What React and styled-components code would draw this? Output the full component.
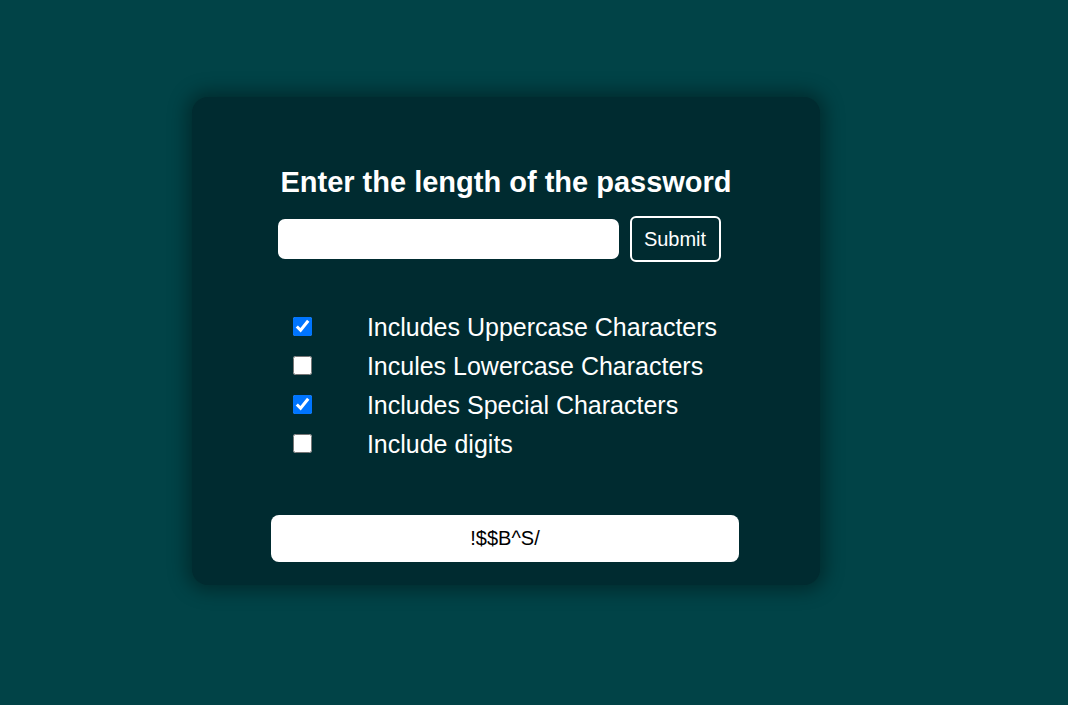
import styled, { createGlobalStyle } from "styled-components";
import { useState, Fragment } from "react";

const GlobalStyle = createGlobalStyle`
  html, body {
    margin: 0;
    padding: 0;
    background: #014347;
    font-family: "Liberation Sans", Arial, sans-serif;
  }
`;

const Page = styled.div`
  width: 1068px;
  height: 705px;
  padding: 97px 0 0 192px;
  box-sizing: border-box;
`;

const Card = styled.div`
  width: 628px;
  height: 488px;
  box-sizing: border-box;
  background: #002b30;
  border-radius: 16px;
  box-shadow: 0 0 18px 6px rgba(0, 0, 0, 0.35);
  display: flex;
  flex-direction: column;
  align-items: center;
  padding-top: 67px;
`;

const Title = styled.h2`
  margin: 0;
  color: #ffffff;
  font-size: 29px;
  font-weight: bold;
  line-height: 36px;
`;

const InputRow = styled.div`
  display: flex;
  align-items: center;
  gap: 11px;
  margin-top: 16px;
  margin-left: -14px;
`;

const LengthInput = styled.input`
  width: 341px;
  height: 40px;
  box-sizing: border-box;
  border: none;
  border-radius: 7px;
  background: #ffffff;
  outline: none;
  font-size: 18px;
  padding: 0 10px;
`;

const SubmitButton = styled.button`
  width: 91px;
  height: 46px;
  box-sizing: border-box;
  background: transparent;
  color: #ffffff;
  border: 2px solid #ffffff;
  border-radius: 6px;
  font-family: "Liberation Sans", Arial, sans-serif;
  font-size: 20px;
  cursor: pointer;
`;

const Options = styled.div`
  display: grid;
  grid-template-columns: 74px auto;
  margin-top: 46px;
  margin-left: -2px;
`;

const CheckBox = styled.input`
  width: 19px;
  height: 19px;
  margin: 0 0 2px;
  align-self: center;
  accent-color: #0075ff;
`;

const OptionLabel = styled.label`
  color: #ffffff;
  font-size: 25px;
  line-height: 39px;
`;

const Output = styled.div`
  width: 468px;
  height: 47px;
  margin-top: 51px;
  margin-left: -2px;
  background: #ffffff;
  border-radius: 8px;
  display: flex;
  align-items: center;
  justify-content: center;
  font-size: 20px;
  color: #000000;
`;

const options = [
  { id: "upper", label: "Includes Uppercase Characters", checked: true },
  { id: "lower", label: "Incules Lowercase Characters", checked: false },
  { id: "special", label: "Includes Special Characters", checked: true },
  { id: "digits", label: "Include digits", checked: false },
];

const App = () => {
  const [checks, setChecks] = useState(options.map((o) => o.checked));

  return (
    <Page>
      <GlobalStyle />
      <Card>
        <Title>Enter the length of the password</Title>
        <InputRow>
          <LengthInput type="text" />
          <SubmitButton>Submit</SubmitButton>
        </InputRow>
        <Options>
          {options.map((o, i) => (
            <Fragment key={o.id}>
              <CheckBox
                id={o.id}
                type="checkbox"
                checked={checks[i]}
                onChange={() =>
                  setChecks(checks.map((c, j) => (j === i ? !c : c)))
                }
              />
              <OptionLabel htmlFor={o.id}>{o.label}</OptionLabel>
            </Fragment>
          ))}
        </Options>
        <Output>!$$B^S/</Output>
      </Card>
    </Page>
  );
};

export default App;
